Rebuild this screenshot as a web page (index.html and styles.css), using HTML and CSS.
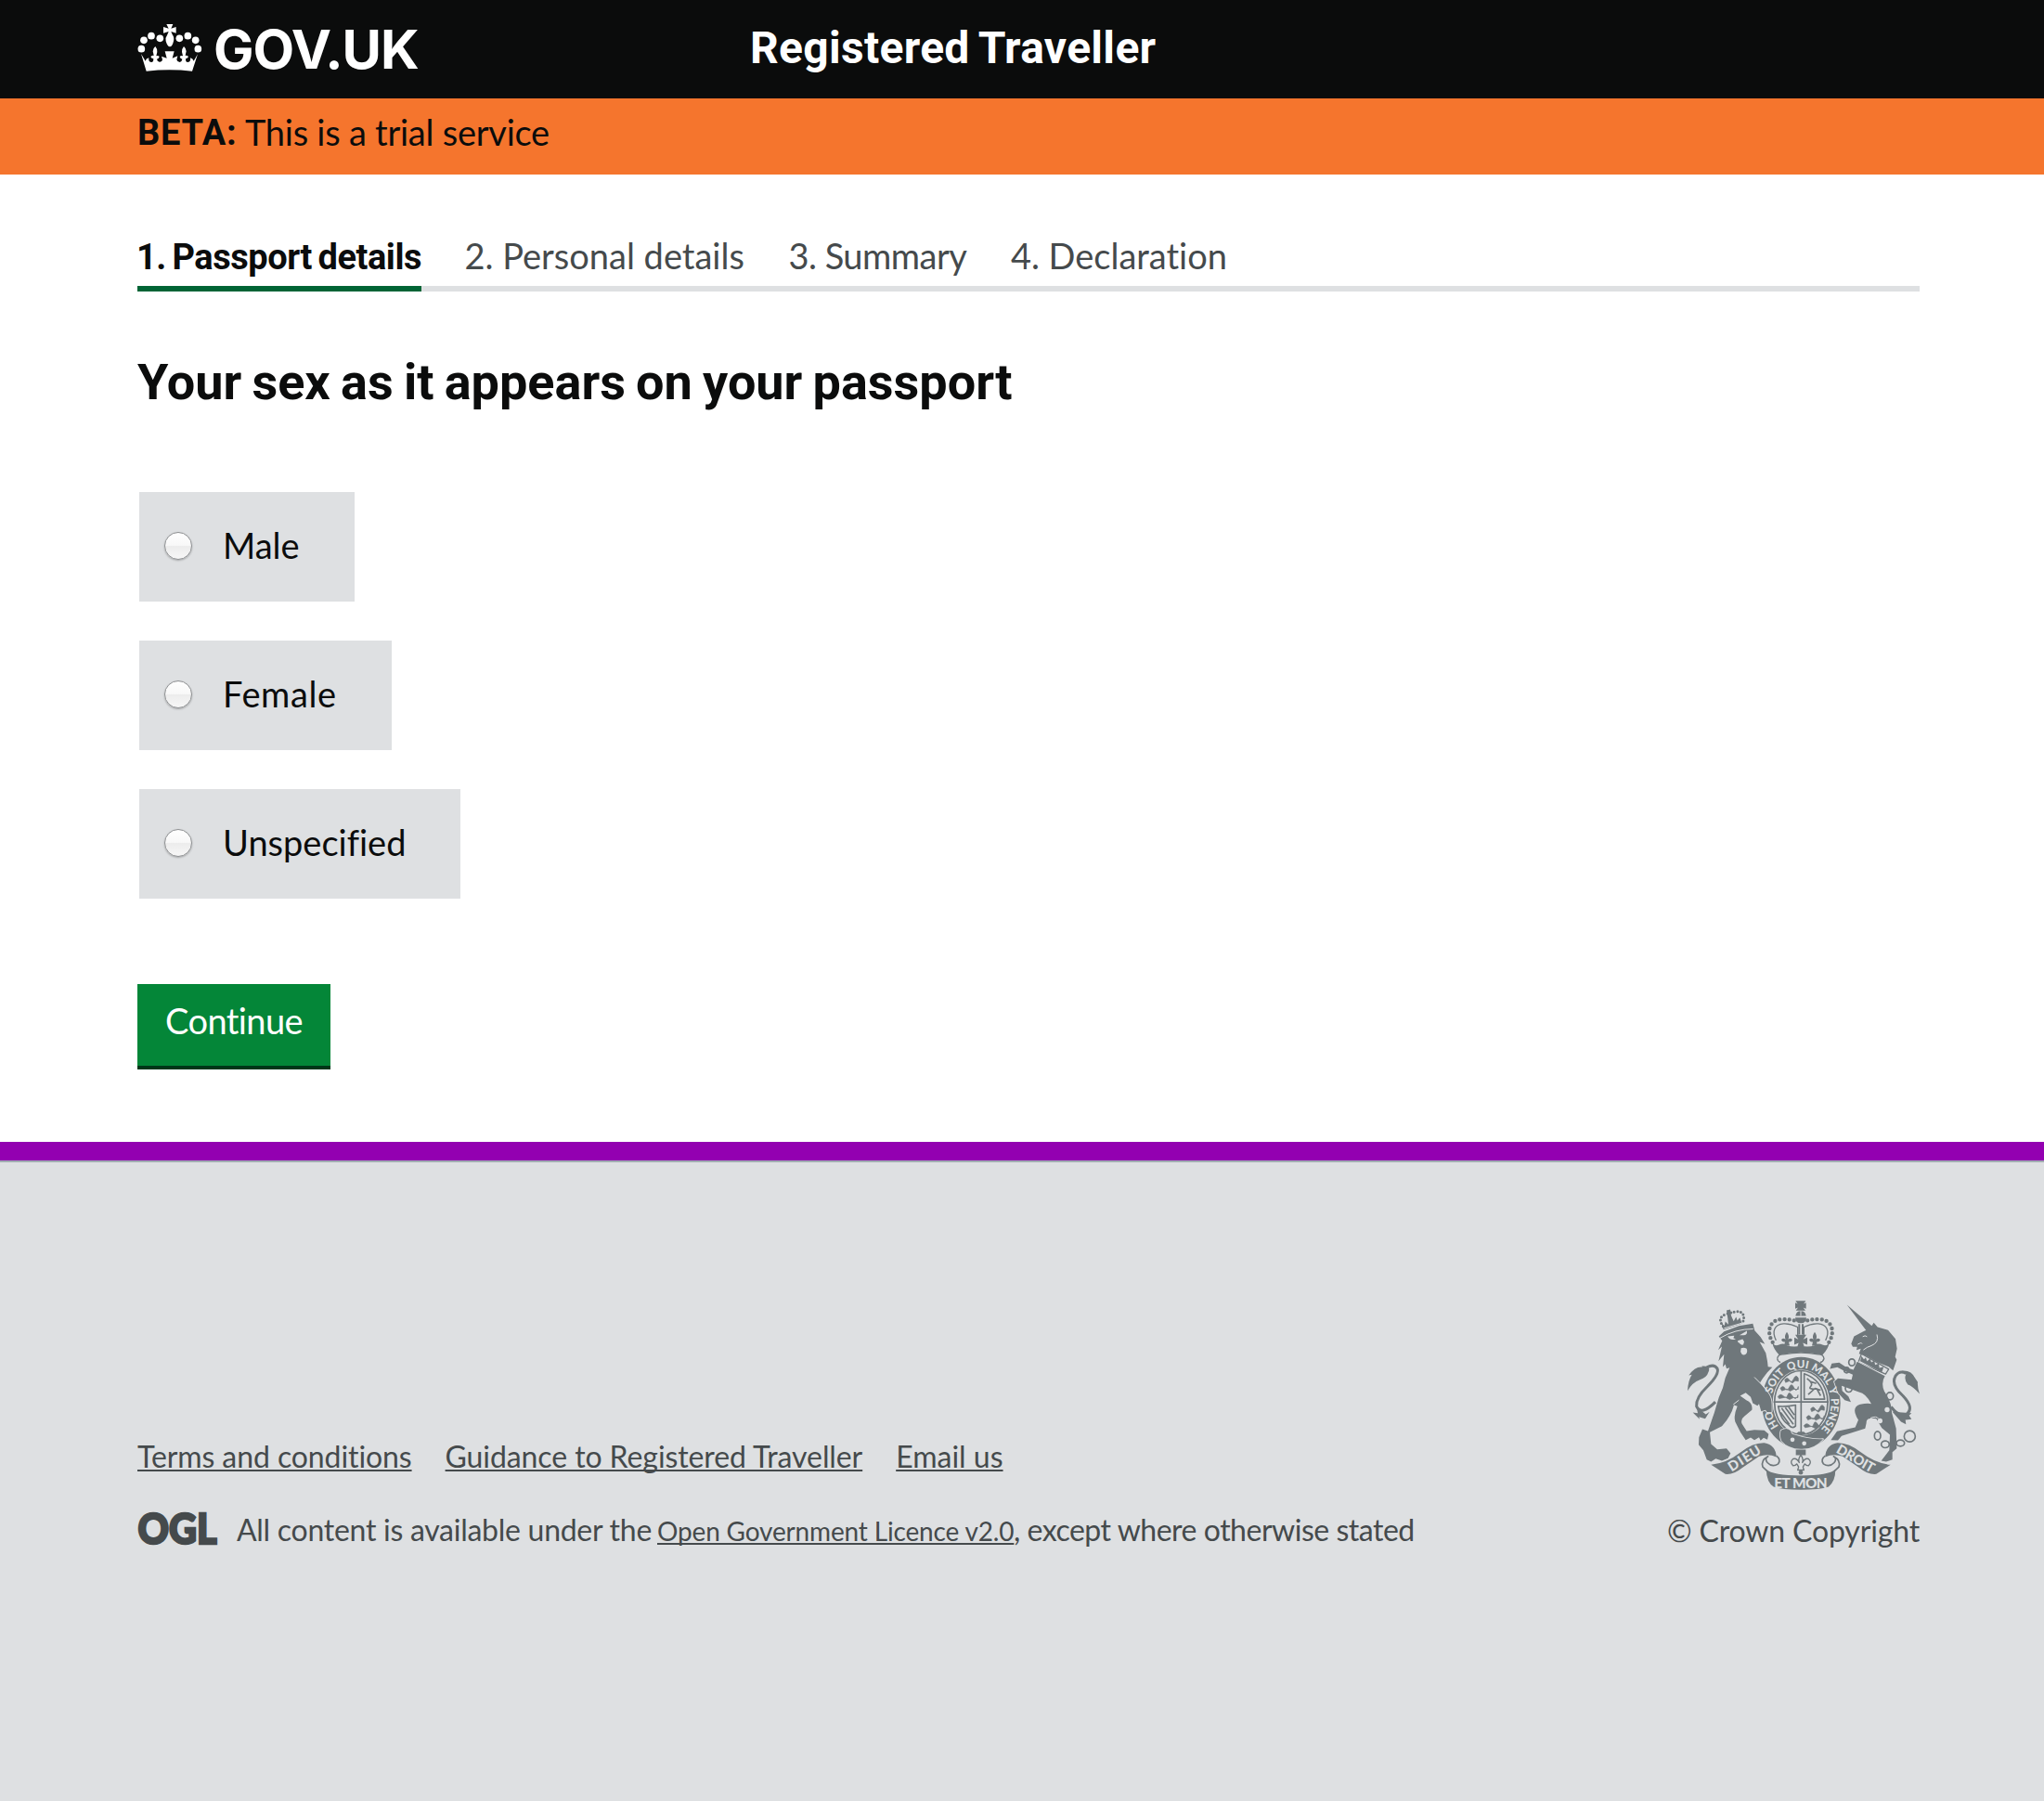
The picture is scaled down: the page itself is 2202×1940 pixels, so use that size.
FILE: index.html
```html
<!DOCTYPE html>
<html lang="en">
<head>
<meta charset="utf-8">
<title>Your sex as it appears on your passport - Registered Traveller</title>
<link rel="stylesheet" href="styles.css">
</head>
<body>
<header class="header">
  <div class="wrap header-row">
    <a class="brand" href="#">
      <svg class="brand-crown" viewBox="24 30 210 162" aria-hidden="true">
        <g fill="#fff">
          <circle cx="69" cy="71" r="11.5"/><circle cx="45" cy="85" r="11.5"/><circle cx="37" cy="113" r="11.5"/><circle cx="97" cy="79" r="11.5"/>
          <circle cx="160" cy="79" r="11.5"/><circle cx="187" cy="71" r="11.5"/><circle cx="212" cy="85" r="11.5"/><circle cx="220" cy="113" r="11.5"/>
          <path d="M118 33h21l-6 14 16-5v20l-16-5 4 10q7 9 4 21-4 18-12 18t-13-18q-2-12 5-21l4-10-17 5V42l17 5z"/>
          <path d="M36 129l14 23q1-7 11-10-3 14 10 14 6-2 5-11-8-1-9-7 6-5 10-3-1-6-3-14 0-10 8-16 7 8 6 18l-3 13q6-3 10 2-1 6-8 8 1 7 8 9 9 1 10-7l-3-11 17 6-6-22h30l-6 22 17-7-3 12q2 8 10 8 7-2 8-10-7-2-8-8 4-5 10-2l-3-13q-1-10 6-18 8 6 8 16-2 8-3 14 5-2 10 3-2 6-9 7-1 9 5 11 13 0 10-14 9 3 11 10l13-22-18 55q-73-8-148 0z"/>
        </g>
      </svg>
      <span class="brand-name">GOV.UK</span>
    </a>
    <span class="service-name">Registered Traveller</span>
  </div>
</header>

<div class="beta">
  <div class="wrap beta-row"><strong class="beta-tag">BETA:</strong><span class="beta-text">This is a trial service</span></div>
</div>

<main class="wrap main">
  <nav class="steps">
    <span class="step step-current">1. Passport details</span>
    <span class="step">2. Personal details</span>
    <span class="step step-tight">3. Summary</span>
    <span class="step">4. Declaration</span>
  </nav>
  <h1 class="title">Your sex as it appears on your passport</h1>
  <form class="form">
    <label class="option"><input class="radio" type="radio" name="sex"><span>Male</span></label>
    <label class="option"><input class="radio" type="radio" name="sex"><span class="option-wide">Female</span></label>
    <label class="option"><input class="radio" type="radio" name="sex"><span>Unspecified</span></label>
    <button class="button" type="button">Continue</button>
  </form>
</main>

<footer class="footer">
  <div class="wrap footer-row">
    <div class="footer-meta">
      <div class="footer-links">
        <a class="link-terms" href="#">Terms and conditions</a>
        <a class="link-guide" href="#">Guidance to Registered Traveller</a>
        <a class="link-email" href="#">Email us</a>
      </div>
      <div class="licence">
        <svg class="ogl" viewBox="0 0 88 50" aria-label="OGL"><text x="0.5" y="34" textLength="85" lengthAdjust="spacingAndGlyphs">OGL</text></svg>
        <span class="licence-lead">All content is available under the</span>
        <a class="licence-link" href="#">Open Government Licence v2.0</a><span class="licence-tail">, except where otherwise stated</span>
      </div>
    </div>
    <div class="copyright">
      <svg class="crest" viewBox="114 64 750 614" aria-hidden="true">
        <defs>
          <path id="motto" d="M481 510A97 113 0 0 1 481 284A97 113 0 0 1 481 510"/>
          <g id="half-crown">
            <path class="beads" d="M389 201C368 168 378 127 420 127C440 126 452 129 465 132"/>
            <path class="line" d="M400 195C385 165 396 143 424 141C442 140 455 144 470 152V184"/>
            <path d="M435 168q10 14 4 24 8-7 14 1-3 9-12 7l3 12h-18l3-12q-9 2-12-7 6-8 14-1-6-10 4-24z"/>
          </g>
          <g id="scroll">
            <path d="M190 597Q240 592 285 557Q325 525 362 526Q400 533 401 572Q375 560 345 570L290 607Q262 630 236 627Z"/>
            <path class="line" d="M401 568Q417 580 407 594Q388 607 372 590Q362 577 374 570Q350 583 357 604L372 618" stroke-width="5"/>
          </g>
        </defs>

        <!-- royal crown -->
        <path d="M463 67h33l-7 10 8-4v20l-9-4 7 10h-31l7-10-9 4V73l8 4z"/>
        <path d="M463 116q2-16 17-16t17 16z"/>
        <path class="paper-line" d="M480 100v16"/>
        <path d="M462 121h36q0 18-18 18t-18-18z"/>
        <use href="#half-crown"/><use href="#half-crown" transform="translate(960) scale(-1 1)"/>
        <path d="M472 142h6v34h-6zM483 142h6v34h-6z"/>
        <path d="M462 177h36l-10 15 13-6v23l-14-6 4 12h-22l4-12-14 6v-23l13 6z"/>
        <path d="M388 202q9 13 20 8 18-8 27 1 22 8 45 1 23 7 45-1 9-9 27-1 11 5 20-8-3 20-22 40-70-16-140 0-19-20-22-40z"/>
        <path class="line" d="M404 254q2-15 20-14 56-10 112 0 17-1 19 14-3 10-12 12"/><path class="line" d="M404 254q1 9 10 12"/>

        <!-- garter and shield -->
        <ellipse cx="481" cy="397" rx="127" ry="148"/>
        <ellipse cx="481" cy="396" rx="92" ry="107" class="paper"/>
        <ellipse cx="481" cy="396" rx="86" ry="103" class="line" stroke-width="5"/>
        <path class="line" d="M481 292v208M392 394h178" stroke-width="5"/>
        <g id="lions" class="squiggle">
          <path d="M428 323q8-12 15 0t14-4 15-2v10l-10-2-9 8-10-7-12 5zM414 350q8-12 15 0t14-4 15 2 14-4v9l-15 0-12 6-10-7-16 6zM406 377q8-12 18-2t14-4 15 4 18-4v9l-15 0-12 6-14-7-20 4z"/>
        </g>
        <use href="#lions" transform="translate(84 94)"/>
        <path class="line" d="M491 303q58 20 66 82h-66zM500 318q22 16 12 26t20 8l12 22M504 370l22-20 18 6M512 328l18 6" stroke-width="5"/>
        <path class="line" d="M407 408q28 2 56-4v68q-10 10-22-4-26-16-34-60zM418 414l38 52M430 412l28 38M441 411l18 25M415 428l28 38" stroke-width="5"/>

        <!-- buckle and pendant -->
        <path class="cut" d="M416 486q20-12 32 2 0 10 12 12 50 16 92 14-30 34-72 32-42-2-62-26-8-18-2-34z"/>
        <circle class="paper" cx="453" cy="516" r="7"/><circle class="paper" cx="491" cy="528" r="7"/>
        <path d="M472 490h18l8 8h-34zM464 548h32v18h-32z"/>
        <path class="line" d="M480 566q10 12 5 24 8-16 20-12 12 10 0 22-8 0-12-6l-6 10 3 10h-20l3-10-6-10q-4 6-12 6-12-12 0-22 12-4 20 12-5-12 5-24z"/>
        <circle cx="480" cy="622" r="7"/>

        <!-- lion -->
        <path class="beads-sm" d="M229 150Q208 120 238 111Q270 98 287 104Q303 116 290 142"/>
        <path d="M240 98l12-3 3 20 8 18 8-14 4 12 8-10 7 20-60 19-7-22 10 10 3-14 10 10-2-20z"/>
        <path class="paper-line" d="M232 156l58-17"/>
        <path class="cut" d="M215 182L232 166 280 148 325 141 331 163 350 184 364 207 347 200 367 236 372 262 374 280 388 282 372 298 357 318 348 332 374 364Q386 380 386 402L386 426 374 432 366 420 352 424 345 400 340 406 325 398 318 378 302 364 284 374 304 388Q326 398 322 420L298 440Q284 450 290 465L305 488 330 484 362 486 376 498 372 516 360 510 350 519 345 508 330 517 318 509 302 517 285 492 268 458Q262 440 275 408L264 404Q255 440 225 472L186 492 190 530 210 547 240 544 253 560 245 576 225 584 205 577 190 587 176 580 165 550 150 532 151 508 162 482 180 488 200 430 215 380Q230 350 236 316L250 283 240 286 236 272 228 281 232 240 214 262 225 215 213 226 226 196Z"/>
        <path class="paper" d="M243 182l22-2-3 8 8 2q-16 8-27-8zM282 178l24-14q2 16-14 14zM276 196l16-5 5 8-3 10q-10 2-12-5-6 0-6-8zM287 220q10-4 18 2 4 10-2 17-8 6-14 0-6-9-2-19z"/>
        <path class="paper-line" d="M330 314l42 42M218 188q50-30 108-30M262 402l18-14"/>
        <path class="line" d="M204 394Q158 440 143 408Q140 380 178 344Q218 304 210 286Q200 270 176 282" stroke-width="9"/>
        <path d="M114 358Q116 324 128 306L118 308Q138 278 162 281L160 278Q190 276 182 296 176 316 154 322 130 330 114 358zM131 428l16 2-4-20 30 24 12-8-14 22-20-6 2 8z"/>

        <!-- unicorn -->
        <path d="M629 80L714 152 692 164Z"/>
        <path d="M643 206L652 182 682 166 704 156 716 138 728 152 762 162 786 190 791 222 785 248 790 258 778 292 764 280 728 266 690 244 668 238 674 222 660 226 662 216 648 216Z"/>
        <path class="paper-line" d="M680 183q8-6 14 0M664 208q12-8 14-2M726 176q8 26-18 36-14 4-26 14"/>
        <path class="line" d="M676 238l88 50-10 16-88-38z" stroke-width="4"/>
        <path d="M672 262l4-16 8 10 6-6 4 12 10-8 4 12 10-6 2 14 12-4 2 14 14-4-6 18z"/>
        <path class="cut" d="M662 264L752 310Q738 332 750 360 775 398 774 428L788 480 790 544 776 556 776 580 756 587 740 584 766 550 768 500 742 478 724 448Q690 442 692 462L688 480 612 504 600 518 577 517 597 489 656 476 666 452Q640 412 672 402 696 396 708 400 690 366 668 362L612 342 614 358 634 376 642 394 622 388 600 364 588 328 600 318 644 322 648 306 618 292 598 282 574 287 580 270 604 267 630 284 650 290Z"/>
        <path class="paper-line" d="M705 446q20-8 26 2"/>
        <path class="line" d="M772 410Q798 446 824 432 846 412 810 374 770 338 786 310 800 290 820 302" stroke-width="9"/>
        <path d="M806 293Q838 290 850 318L858 330Q856 344 864 368 840 342 826 338 812 320 820 304zM776 426l28 32 16 8-2-14 20-2-8-12 8-8-30-2z"/>
        <g class="chain">
          <ellipse cx="645" cy="266" rx="10" ry="11"/><ellipse cx="628" cy="291" rx="8" ry="9"/><ellipse cx="635" cy="350" rx="11" ry="12"/>
          <ellipse cx="768" cy="375" rx="11" ry="12"/><ellipse cx="728" cy="503" rx="10" ry="14"/><ellipse cx="753" cy="531" rx="13" ry="11"/>
          <ellipse cx="802" cy="527" rx="13" ry="10"/><circle cx="832" cy="505" r="18"/>
        </g>
        <circle class="paper" cx="759" cy="419" r="8"/><circle class="paper" cx="736" cy="455" r="8"/>
        <g class="garter-text">
          <text><textPath href="#motto" startOffset="17%">HO</textPath></text>
          <text><textPath href="#motto" startOffset="35.5%">SOIT</textPath></text>
          <text><textPath href="#motto" startOffset="48.5%">QUI</textPath></text>
          <text><textPath href="#motto" startOffset="60.5%">MAL</textPath></text>
          <text><textPath href="#motto" startOffset="69.5%">Y</textPath></text>
          <text><textPath href="#motto" startOffset="81%">PENSE</textPath></text>
        </g>

        <!-- motto scrolls -->
        <use href="#scroll"/><use href="#scroll" transform="translate(960) scale(-1 1)"/>
        <path d="M368 612Q390 632 480 632 570 632 592 612 592 650 570 668 540 678 480 678 420 678 392 668 370 655 368 612z"/>
        <g class="scroll-text">
          <text transform="translate(306 589) rotate(-32)" textLength="116">DIEU</text>
          <text class="scroll-mid" transform="translate(480 671)" textLength="172">ET MON</text>
          <text transform="translate(650 590) rotate(30)" textLength="134">DROIT</text>
        </g>
      </svg>
      <a class="copyright-text" href="#">© Crown Copyright</a>
    </div>
  </div>
</footer>
</body>
</html>
```
FILE: styles.css
```css
* { box-sizing: border-box; }

body {
  margin: 0;
  background: #fff;
  color: #0b0c0c;
  font-family: Lato, "Open Sans", sans-serif;
  font-size: 38px;
  font-variant-ligatures: none;
  white-space: nowrap;
}

a { color: inherit; text-decoration: none; }

.wrap { margin: 0 134px 0 148px; }

/* Header */
.header { height: 106px; background: #0b0c0c; color: #fff; }
.header-row { display: flex; }
.brand { display: flex; width: 660px; }
.brand-crown { display: block; width: 70px; height: 54px; margin-top: 25px; }
.brand-name {
  margin-left: 12px;
  font: 700 58px/106px Inter, sans-serif;
  letter-spacing: -1.1px;
}
.service-name { font: 700 48px/104px Roboto, sans-serif; letter-spacing: 0.3px; word-spacing: -2px; }

/* Phase banner */
.beta { height: 82px; background: #f5752d; }
.beta-row { display: flex; line-height: 72px; }
.beta-tag { width: 116px; font: 700 38px/75px Roboto, sans-serif; letter-spacing: 0.73px; }
.beta-text { letter-spacing: -0.25px; }

/* Step tabs */
.steps {
  display: flex;
  gap: 47.5px;
  height: 126px;
  padding-top: 62px;
  border-bottom: 6px solid #dee0e2;
  color: #454a4c;
}
.step { line-height: 50px; }
.step-tight { letter-spacing: -0.5px; }
.step-current {
  width: 306px;
  height: 64px;
  margin-right: -1px;
  border-bottom: 6px solid #006435;
  color: #0b0c0c;
  font: 700 38px/54px Roboto, sans-serif;
  letter-spacing: -0.45px;
  text-indent: -1px;
  word-spacing: -2.5px;
}

.title {
  margin: 68px 0 0;
  font: 700 54px/60px Roboto, sans-serif;
  letter-spacing: 0;
  word-spacing: -2.2px;
}

/* Radio options */
.form {
  display: flex;
  flex-direction: column;
  align-items: flex-start;
  gap: 42px;
  padding-top: 88px;
}
.option {
  display: flex;
  gap: 33px;
  height: 118px;
  margin-left: 2px;
  padding: 0 59px 0 27px;
  background: #dee0e2;
  line-height: 115px;
}
.option-wide { letter-spacing: 0.6px; }
.radio {
  appearance: none;
  width: 30px;
  height: 30px;
  margin: 43px 0 0;
  border: 1.5px solid #8e9092;
  border-radius: 50%;
  background: linear-gradient(#fff 0, #f8f8f8 48%, #ececec 50%, #f7f7f7 100%);
  box-shadow: 0 1px 2px rgba(0, 0, 0, 0.25);
}
.button {
  width: 208px;
  height: 92px;
  margin: 50px 0 78px;
  padding: 0 0 9px;
  border: 0;
  border-bottom: 4px solid #003618;
  background: #048638;
  color: #fff;
  font: 400 38px/79px Lato, sans-serif;
  font-variant-ligatures: none;
  letter-spacing: -0.6px;
}

/* Footer */
.footer {
  height: 710px;
  border-top: 20px solid #9300b1;
  background: #dee0e2;
  box-shadow: inset 0 2px #a1acb2;
  color: #454a4c;
  font-size: 32px;
  line-height: 40px;
}
.footer-row {
  display: flex;
  justify-content: space-between;
  align-items: flex-end;
  padding-top: 150px;
}
.footer-meta { display: flex; flex-direction: column; gap: 39px; }
.footer-links { display: flex; gap: 36px; }
.footer-links a, .licence-link {
  text-decoration: underline 2px;
  text-decoration-skip-ink: none;
  text-underline-offset: 2px;
}
.link-terms, .link-guide { letter-spacing: -0.09px; }
.licence { display: flex; align-items: baseline; height: 41px; }
.ogl { align-self: flex-start; overflow: visible; width: 88px; height: 50px; margin: 1px 19px 0 0; fill: #454a4c; }
.ogl text { font: 900 46px Lato, sans-serif; stroke: #454a4c; stroke-width: 2.5px; }
.licence-lead { width: 453px; letter-spacing: -0.27px; }
.licence-link { width: 384px; font-size: 28px; letter-spacing: -0.16px; }
.licence-tail { letter-spacing: -0.48px; }

.copyright { display: flex; flex-direction: column; align-items: flex-end; gap: 24px; }
.crest { display: block; width: 250px; height: 205px; }
.copyright-text { letter-spacing: -0.15px; }

/* Coat of arms */
.crest { fill: #6f777b; stroke-linejoin: round; }
.crest .paper { fill: #dee0e2; }
.line { fill: none; stroke: #6f777b; stroke-width: 4px; }
.line[stroke-width="5"] { stroke-width: 5px; }
.line[stroke-width="9"] { stroke-width: 9px; }
.paper-line { fill: none; stroke: #dee0e2; stroke-width: 3px; }
.cut { stroke: #dee0e2; stroke-width: 5px; paint-order: stroke; }
.beads { fill: none; stroke: #6f777b; stroke-width: 13px; stroke-linecap: round; stroke-dasharray: 0 15.5px; }
.beads-sm { fill: none; stroke: #6f777b; stroke-width: 9px; stroke-linecap: round; stroke-dasharray: 0 11px; }
.squiggle { stroke: #6f777b; stroke-width: 2px; }
.chain { fill: none; stroke: #6f777b; stroke-width: 5px; }
.garter-text, .scroll-text { fill: #dee0e2; font-family: Lato, sans-serif; font-weight: 900; text-anchor: middle; }
.garter-text { font-size: 35px; }
.scroll-text { font-size: 44px; }
.scroll-mid { font-size: 46px; }
```
